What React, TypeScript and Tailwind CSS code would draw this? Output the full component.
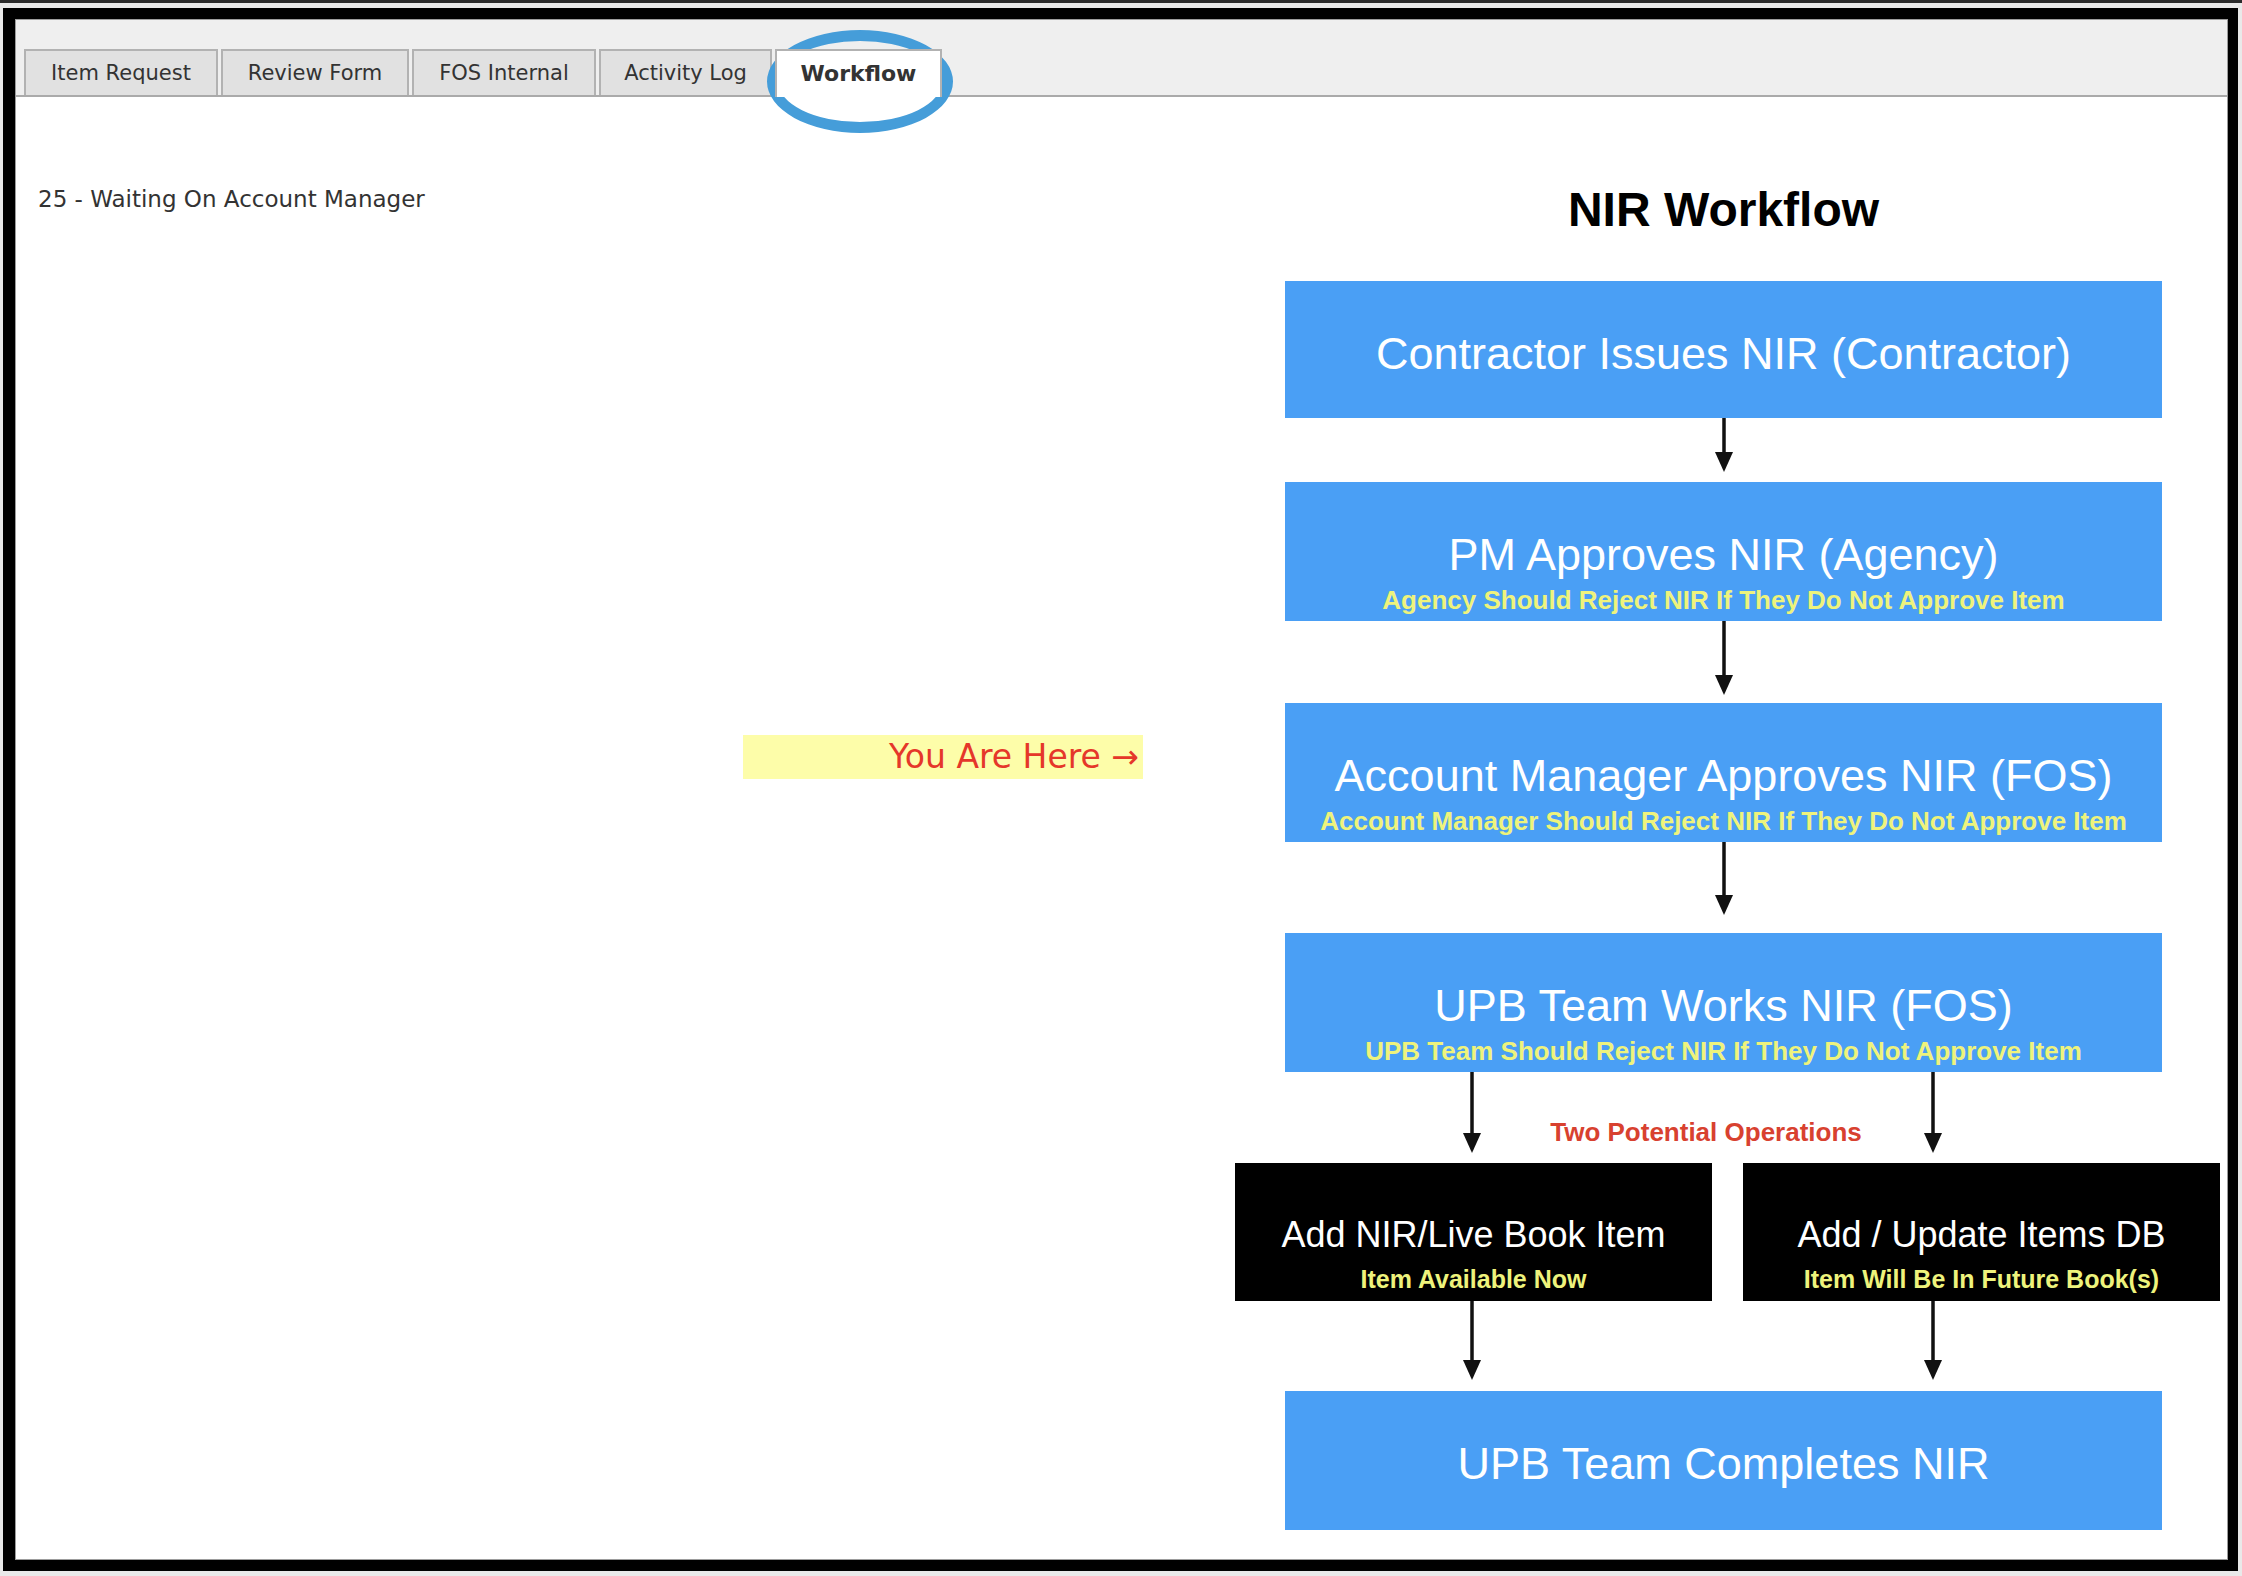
import React from "react";

const DIAG = "font-['Liberation_Sans',Arial,sans-serif]";
const UI = "font-['DejaVu_Sans',Verdana,sans-serif]";

function BlueBox({ title, sub, h = 139 }: { title: string; sub?: string; h?: number }) {
  return (
    <div
      className={`ml-[50px] w-[877px] shrink-0 bg-[#4a9ff5] flex flex-col items-center pt-[50px] ${h === 137 ? "h-[137px]" : "h-[139px]"}`}
    >
      <div className="text-[45px] leading-none text-white whitespace-nowrap">{title}</div>
      {sub && (
        <div className="mt-[10px] text-[26px] leading-none font-bold text-[#eef37c] whitespace-nowrap">{sub}</div>
      )}
    </div>
  );
}

function BlackBox({ title, sub }: { title: string; sub: string }) {
  return (
    <div className="w-[477px] h-[138px] bg-black flex flex-col items-center pt-[54px]">
      <div className="text-[36px] leading-none text-white whitespace-nowrap">{title}</div>
      <div className="mt-[14px] text-[25px] leading-none font-bold text-[#eef37c] whitespace-nowrap">{sub}</div>
    </div>
  );
}

function ArrowSvg({ h, tip, xs }: { h: number; tip: number; xs: number[] }) {
  return (
    <svg width={986} height={h} className="block shrink-0">
      {xs.map((x) => (
        <g key={x}>
          <line x1={x} y1={0} x2={x} y2={tip - 16} stroke="#111" strokeWidth={3.5} />
          <polygon points={`${x - 9},${tip - 20} ${x + 9},${tip - 20} ${x},${tip}`} fill="#111" />
        </g>
      ))}
    </svg>
  );
}

const tabs = [
  { label: "Item Request", w: "w-[194px]" },
  { label: "Review Form", w: "w-[188px]" },
  { label: "FOS Internal", w: "w-[184px]" },
  { label: "Activity Log", w: "w-[173px]" },
];

export default function App() {
  return (
    <div className="relative w-[2242px] h-[1576px] bg-[#e9e9e9] overflow-hidden">
      <div className="h-[3px] bg-[#2b2b2b]" />
      <div className="ml-[3px] mt-[5px] w-[2235px] h-[1563px] box-border border-solid border-black border-t-[11px] border-b-[11px] border-l-[12px] border-r-[10px]">
        <div className="w-full h-full box-border border border-[#9c9c9c] bg-white flex flex-col">
          {/* Tab bar */}
          <div className={`flex items-end gap-[3px] pt-[29px] pl-[8px] bg-[#efefef] border-b-2 border-[#aaaaaa] ${UI}`}>
            {tabs.map((t) => (
              <div
                key={t.label}
                className={`${t.w} h-[46px] box-border border-2 border-b-0 border-[#b2b2b2] bg-[#e1e1e1] flex items-center justify-center pt-[1px] text-[21px] text-[#333] whitespace-nowrap`}
              >
                {t.label}
              </div>
            ))}
            <div className="relative z-10 w-[167px] h-[48px] -mb-[2px] box-border border-2 border-b-0 border-[#b2b2b2] bg-white flex items-start justify-center pt-[6px] text-[22px] font-bold text-[#333] whitespace-nowrap">
              Workflow
            </div>
          </div>

          {/* Content */}
          <div className="flex-1 flex pt-[89px]">
            {/* Left column */}
            <div className={`w-[1219px] shrink-0 pl-[22px] flex flex-col ${UI}`}>
              <div className="text-[23px] leading-[27px] text-[#333] whitespace-nowrap">25 - Waiting On Account Manager</div>
              <div className="mt-[522px] ml-[705px] w-[400px] h-[44px] bg-[#fdfda9] flex items-center justify-end pr-[4px] text-[33px] text-[#e5372a] whitespace-nowrap">
                You Are Here →
              </div>
            </div>

            {/* Workflow diagram */}
            <div className={`w-[986px] shrink-0 flex flex-col ${DIAG}`}>
              <div className="ml-[50px] w-[877px] h-[48px] text-center text-[48px] leading-none font-bold text-black">
                NIR Workflow
              </div>
              <div className="h-[47px]" />
              <BlueBox title="Contractor Issues NIR (Contractor)" h={137} />
              <ArrowSvg h={64} tip={54} xs={[489]} />
              <BlueBox title="PM Approves NIR (Agency)" sub="Agency Should Reject NIR If They Do Not Approve Item" />
              <ArrowSvg h={82} tip={74} xs={[489]} />
              <BlueBox
                title="Account Manager Approves NIR (FOS)"
                sub="Account Manager Should Reject NIR If They Do Not Approve Item"
              />
              <ArrowSvg h={91} tip={73} xs={[489]} />
              <BlueBox title="UPB Team Works NIR (FOS)" sub="UPB Team Should Reject NIR If They Do Not Approve Item" />
              <div className="relative h-[91px] shrink-0">
                <ArrowSvg h={91} tip={81} xs={[237, 698]} />
                <div className="absolute left-[471px] top-[47px] -translate-x-1/2 text-[26px] leading-none font-bold text-[#d8412f] whitespace-nowrap">
                  Two Potential Operations
                </div>
              </div>
              <div className="flex gap-[31px] shrink-0">
                <BlackBox title="Add NIR/Live Book Item" sub="Item Available Now" />
                <BlackBox title="Add / Update Items DB" sub="Item Will Be In Future Book(s)" />
              </div>
              <ArrowSvg h={90} tip={79} xs={[237, 698]} />
              <BlueBox title="UPB Team Completes NIR" />
            </div>
          </div>
        </div>
      </div>

      {/* Annotation circle around the Workflow tab */}
      <div className="absolute left-[767px] top-[30px] w-[186px] h-[103px] rounded-[50%] border-[11px] border-[#459dd9] pointer-events-none" />
    </div>
  );
}
